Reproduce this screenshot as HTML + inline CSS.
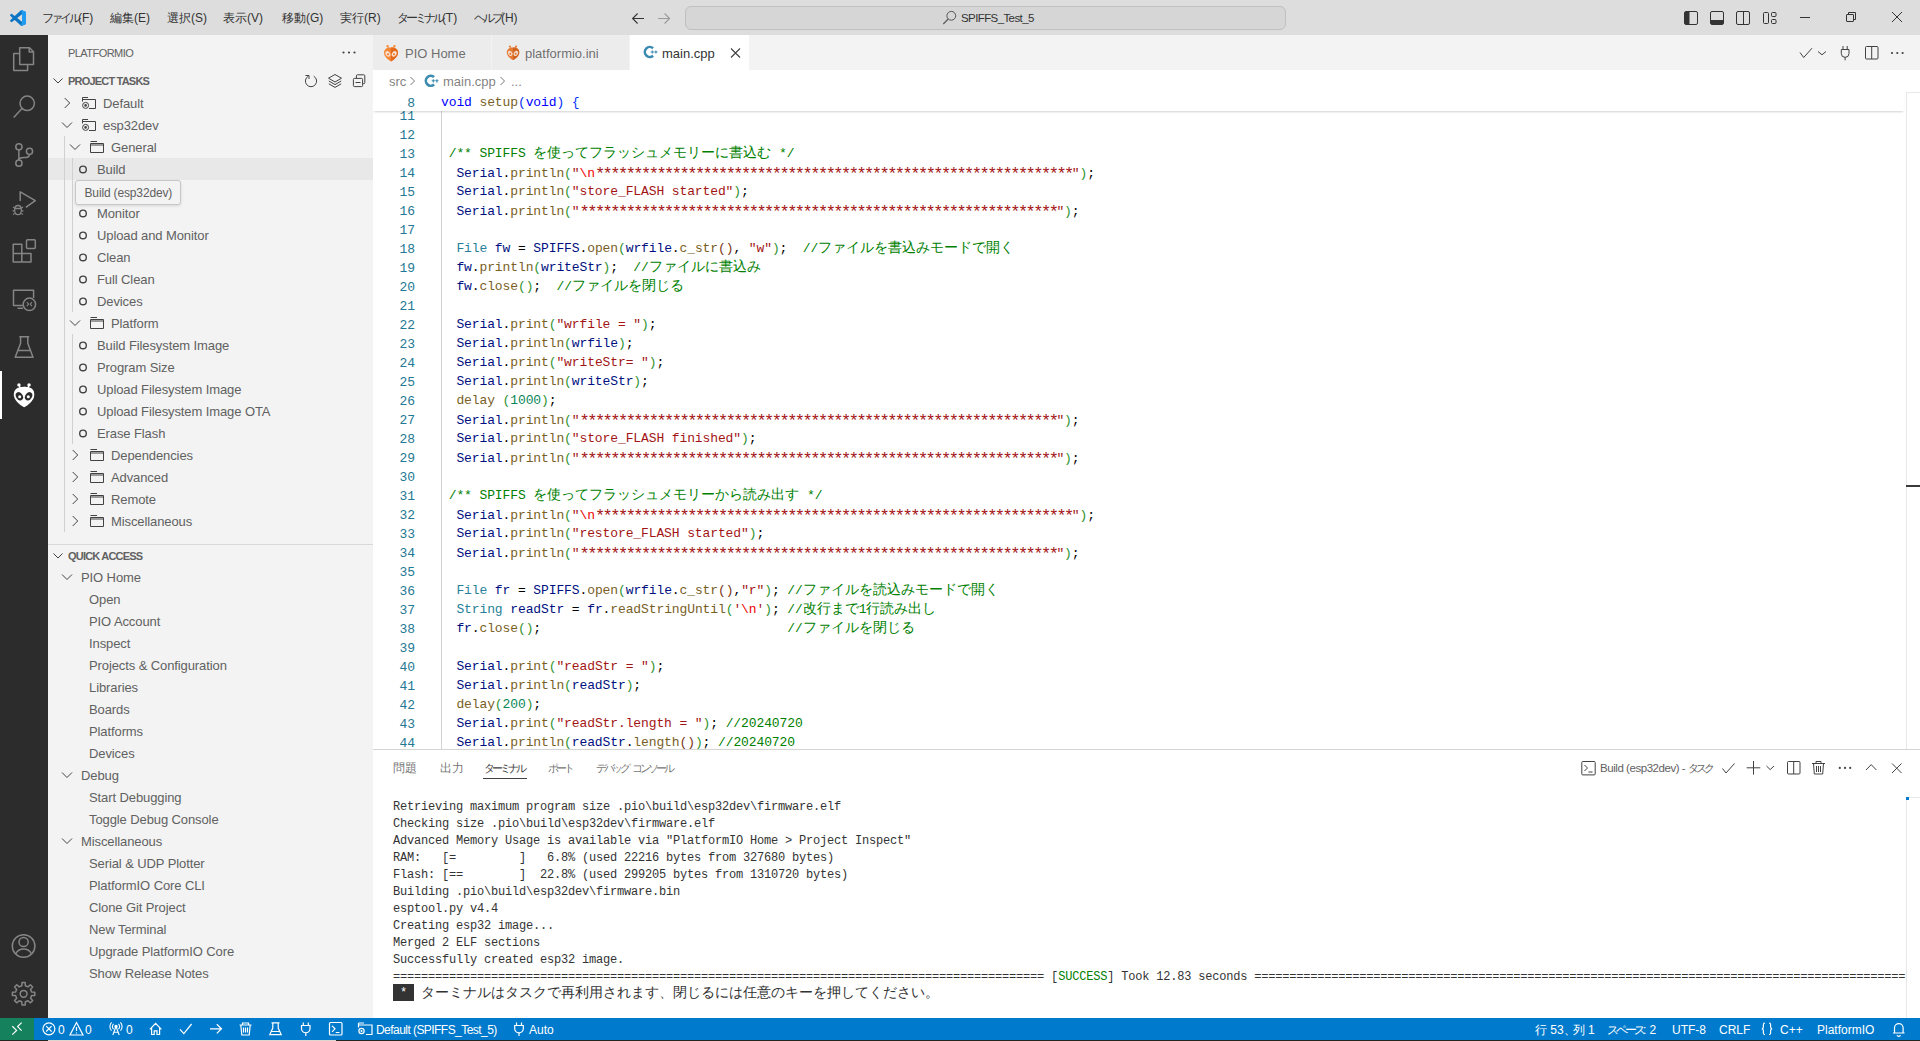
<!DOCTYPE html><html><head><meta charset="utf-8"><style>
*{box-sizing:border-box}
html,body{margin:0;padding:0}
body{width:1920px;height:1041px;overflow:hidden;position:relative;background:#fff;font-family:"Liberation Sans",sans-serif;font-size:13px;color:#616161}
.a{position:absolute}
.t{position:absolute;white-space:pre}
svg{position:absolute;overflow:visible}
#title{left:0;top:0;width:1920px;height:35px;background:#dddddd}
#act{left:0;top:35px;width:48px;height:983px;background:#2c2c2c}
#side{left:48px;top:35px;width:325px;height:983px;background:#f3f3f3}
#tabs{left:373px;top:35px;width:1547px;height:35px;background:#f3f3f3}
#status{left:0;top:1018px;width:1920px;height:22px;background:#007acc}
.menu{color:#333;font-size:12px}
.code{font-family:"Liberation Mono",monospace;font-size:13px;letter-spacing:-0.11px;line-height:19px;height:19px}
.k{font-size:0.97em;letter-spacing:-0.26em}
.code .j,.code .k{font-size:14px;letter-spacing:0;line-height:0}
.term{font-family:"Liberation Mono",monospace;font-size:12px;letter-spacing:-0.2px;color:#333}
.term .j,.term .k{font-size:14px;letter-spacing:0;line-height:0}
.ln{color:#237893}
.kw{color:#0000ff}.fn{color:#795e26}.vr{color:#001080}.st{color:#a31515}.es{color:#ee0000}.cm{color:#008000}.ty{color:#267f99}.nu{color:#098658}.op{color:#000}
.ast{font-size:17px;letter-spacing:-2.51px;position:relative;top:1.5px}
.b1{color:#0431fa}.b2{color:#319331}.b3{color:#7b3814}
.sb{color:#fff;font-size:12px}
</style></head><body>
<div class="a" id="title"></div>
<div class="t menu" style="left:42px;top:7.0px;height:22px;line-height:22px;"><span class="k">ファイル</span>(F)</div>
<div class="t menu" style="left:110px;top:7.0px;height:22px;line-height:22px;"><span class="j">編集</span>(E)</div>
<div class="t menu" style="left:167px;top:7.0px;height:22px;line-height:22px;"><span class="j">選択</span>(S)</div>
<div class="t menu" style="left:223px;top:7.0px;height:22px;line-height:22px;"><span class="j">表示</span>(V)</div>
<div class="t menu" style="left:282px;top:7.0px;height:22px;line-height:22px;"><span class="j">移動</span>(G)</div>
<div class="t menu" style="left:340px;top:7.0px;height:22px;line-height:22px;"><span class="j">実行</span>(R)</div>
<div class="t menu" style="left:397px;top:7.0px;height:22px;line-height:22px;"><span class="k">ターミナル</span>(T)</div>
<div class="t menu" style="left:474px;top:7.0px;height:22px;line-height:22px;"><span class="k">ヘルプ</span>(H)</div>
<div class="a" style="left:685px;top:6px;width:601px;height:24px;background:#d6d6d6;border:1px solid #c0c0c0;border-radius:6px"></div>
<div class="t " style="left:961px;top:7.0px;height:22px;line-height:22px;color:#333;font-size:11.5px;letter-spacing:-0.6px">SPIFFS_Test_5</div>
<div class="a" id="act"></div>
<div class="a" style="left:0;top:371px;width:2px;height:48px;background:#fff"></div>
<div class="a" id="side"></div>
<div class="t " style="left:68px;top:42.0px;height:22px;line-height:22px;font-size:11px;letter-spacing:-0.55px;color:#616161">PLATFORMIO</div>
<div class="t " style="left:68px;top:70.0px;height:22px;line-height:22px;font-size:11px;letter-spacing:-0.8px;font-weight:bold;color:#616161">PROJECT TASKS</div>
<div class="a" style="left:48px;top:158px;width:325px;height:22px;background:#e8e8e8"></div>
<div class="t " style="left:103px;top:93.0px;height:22px;line-height:22px;letter-spacing:-0.1px">Default</div>
<div class="t " style="left:103px;top:115.0px;height:22px;line-height:22px;letter-spacing:-0.1px">esp32dev</div>
<div class="t " style="left:111px;top:137.0px;height:22px;line-height:22px;letter-spacing:-0.1px">General</div>
<div class="t " style="left:97px;top:159.0px;height:22px;line-height:22px;letter-spacing:-0.1px">Build</div>
<div class="t " style="left:97px;top:181.0px;height:22px;line-height:22px;letter-spacing:-0.1px">Upload</div>
<div class="t " style="left:97px;top:203.0px;height:22px;line-height:22px;letter-spacing:-0.1px">Monitor</div>
<div class="t " style="left:97px;top:225.0px;height:22px;line-height:22px;letter-spacing:-0.1px">Upload and Monitor</div>
<div class="t " style="left:97px;top:247.0px;height:22px;line-height:22px;letter-spacing:-0.1px">Clean</div>
<div class="t " style="left:97px;top:269.0px;height:22px;line-height:22px;letter-spacing:-0.1px">Full Clean</div>
<div class="t " style="left:97px;top:291.0px;height:22px;line-height:22px;letter-spacing:-0.1px">Devices</div>
<div class="t " style="left:111px;top:313.0px;height:22px;line-height:22px;letter-spacing:-0.1px">Platform</div>
<div class="t " style="left:97px;top:335.0px;height:22px;line-height:22px;letter-spacing:-0.1px">Build Filesystem Image</div>
<div class="t " style="left:97px;top:357.0px;height:22px;line-height:22px;letter-spacing:-0.1px">Program Size</div>
<div class="t " style="left:97px;top:379.0px;height:22px;line-height:22px;letter-spacing:-0.1px">Upload Filesystem Image</div>
<div class="t " style="left:97px;top:401.0px;height:22px;line-height:22px;letter-spacing:-0.1px">Upload Filesystem Image OTA</div>
<div class="t " style="left:97px;top:423.0px;height:22px;line-height:22px;letter-spacing:-0.1px">Erase Flash</div>
<div class="t " style="left:111px;top:445.0px;height:22px;line-height:22px;letter-spacing:-0.1px">Dependencies</div>
<div class="t " style="left:111px;top:467.0px;height:22px;line-height:22px;letter-spacing:-0.1px">Advanced</div>
<div class="t " style="left:111px;top:489.0px;height:22px;line-height:22px;letter-spacing:-0.1px">Remote</div>
<div class="t " style="left:111px;top:511.0px;height:22px;line-height:22px;letter-spacing:-0.1px">Miscellaneous</div>
<div class="a" style="left:64px;top:136px;width:1px;height:396px;background:#d0d0d0"></div>
<div class="a" style="left:72px;top:158px;width:1px;height:154px;background:#d0d0d0"></div>
<div class="a" style="left:72px;top:334px;width:1px;height:110px;background:#d0d0d0"></div>
<div class="a" style="left:75px;top:180px;width:106px;height:25px;background:#f3f3f3;border:1px solid #c8c8c8;border-radius:3px;box-shadow:0 1px 3px rgba(0,0,0,.12)"></div>
<div class="t " style="left:84.5px;top:182.0px;height:22px;line-height:22px;font-size:12px;letter-spacing:-0.15px;color:#616161">Build (esp32dev)</div>
<div class="a" style="left:48px;top:544px;width:325px;height:1px;background:#d9d9d9"></div>
<div class="t " style="left:68px;top:545.0px;height:22px;line-height:22px;font-size:11px;letter-spacing:-0.8px;font-weight:bold;color:#616161">QUICK ACCESS</div>
<div class="t " style="left:81px;top:567.0px;height:22px;line-height:22px;letter-spacing:-0.1px">PIO Home</div>
<div class="t " style="left:89px;top:589.0px;height:22px;line-height:22px;letter-spacing:-0.1px">Open</div>
<div class="t " style="left:89px;top:611.0px;height:22px;line-height:22px;letter-spacing:-0.1px">PIO Account</div>
<div class="t " style="left:89px;top:633.0px;height:22px;line-height:22px;letter-spacing:-0.1px">Inspect</div>
<div class="t " style="left:89px;top:655.0px;height:22px;line-height:22px;letter-spacing:-0.1px">Projects &amp; Configuration</div>
<div class="t " style="left:89px;top:677.0px;height:22px;line-height:22px;letter-spacing:-0.1px">Libraries</div>
<div class="t " style="left:89px;top:699.0px;height:22px;line-height:22px;letter-spacing:-0.1px">Boards</div>
<div class="t " style="left:89px;top:721.0px;height:22px;line-height:22px;letter-spacing:-0.1px">Platforms</div>
<div class="t " style="left:89px;top:743.0px;height:22px;line-height:22px;letter-spacing:-0.1px">Devices</div>
<div class="t " style="left:81px;top:765.0px;height:22px;line-height:22px;letter-spacing:-0.1px">Debug</div>
<div class="t " style="left:89px;top:787.0px;height:22px;line-height:22px;letter-spacing:-0.1px">Start Debugging</div>
<div class="t " style="left:89px;top:809.0px;height:22px;line-height:22px;letter-spacing:-0.1px">Toggle Debug Console</div>
<div class="t " style="left:81px;top:831.0px;height:22px;line-height:22px;letter-spacing:-0.1px">Miscellaneous</div>
<div class="t " style="left:89px;top:853.0px;height:22px;line-height:22px;letter-spacing:-0.1px">Serial &amp; UDP Plotter</div>
<div class="t " style="left:89px;top:875.0px;height:22px;line-height:22px;letter-spacing:-0.1px">PlatformIO Core CLI</div>
<div class="t " style="left:89px;top:897.0px;height:22px;line-height:22px;letter-spacing:-0.1px">Clone Git Project</div>
<div class="t " style="left:89px;top:919.0px;height:22px;line-height:22px;letter-spacing:-0.1px">New Terminal</div>
<div class="t " style="left:89px;top:941.0px;height:22px;line-height:22px;letter-spacing:-0.1px">Upgrade PlatformIO Core</div>
<div class="t " style="left:89px;top:963.0px;height:22px;line-height:22px;letter-spacing:-0.1px">Show Release Notes</div>
<div class="a" id="tabs"></div>
<div class="a" style="left:373px;top:35px;width:119px;height:35px;background:#ececec;border-right:1px solid #f3f3f3"></div>
<div class="a" style="left:492px;top:35px;width:138px;height:35px;background:#ececec;border-right:1px solid #f3f3f3"></div>
<div class="a" style="left:630px;top:35px;width:119px;height:35px;background:#ffffff"></div>
<div class="t " style="left:405px;top:43.0px;height:22px;line-height:22px;color:rgba(51,51,51,.7)">PIO Home</div>
<div class="t " style="left:525px;top:43.0px;height:22px;line-height:22px;color:rgba(51,51,51,.7)">platformio.ini</div>
<div class="t " style="left:662px;top:43.0px;height:22px;line-height:22px;color:#333">main.cpp</div>
<div class="t " style="left:389px;top:71.0px;height:22px;line-height:22px;color:rgba(97,97,97,.8)">src</div>
<div class="t " style="left:443px;top:71.0px;height:22px;line-height:22px;color:rgba(97,97,97,.8)">main.cpp</div>
<div class="t " style="left:511px;top:71.0px;height:22px;line-height:22px;color:rgba(97,97,97,.8)">...</div>
<div class="a" style="left:373px;top:92px;width:1547px;height:657px;overflow:hidden">
<div class="a" style="left:68px;top:19px;width:1px;height:657px;background:#d3d3d3"></div>
<div class="t code ln" style="left:0;width:42px;text-align:right;top:15px">11</div>
<div class="t code ln" style="left:0;width:42px;text-align:right;top:34px">12</div>
<div class="t code ln" style="left:0;width:42px;text-align:right;top:53px">13</div>
<div class="t code" style="left:68px;top:52px"> <span class="cm">/** SPIFFS <span class="k">を</span><span class="j">使</span><span class="k">ってフラッシュメモリーに</span><span class="j">書込</span><span class="k">む</span> */</span></div>
<div class="t code ln" style="left:0;width:42px;text-align:right;top:72px">14</div>
<div class="t code" style="left:68px;top:71px">  <span class="vr">Serial</span><span class="op">.</span><span class="fn">println</span><span class="b2">(</span><span class="st">"</span><span class="es">\n</span><span class="st"><span class="ast">**************************************************************</span>"</span><span class="b2">)</span><span class="op">;</span></div>
<div class="t code ln" style="left:0;width:42px;text-align:right;top:91px">15</div>
<div class="t code" style="left:68px;top:90px">  <span class="vr">Serial</span><span class="op">.</span><span class="fn">println</span><span class="b2">(</span><span class="st">"store_FLASH started"</span><span class="b2">)</span><span class="op">;</span></div>
<div class="t code ln" style="left:0;width:42px;text-align:right;top:110px">16</div>
<div class="t code" style="left:68px;top:109px">  <span class="vr">Serial</span><span class="op">.</span><span class="fn">println</span><span class="b2">(</span><span class="st">"<span class="ast">**************************************************************</span>"</span><span class="b2">)</span><span class="op">;</span></div>
<div class="t code ln" style="left:0;width:42px;text-align:right;top:129px">17</div>
<div class="t code ln" style="left:0;width:42px;text-align:right;top:148px">18</div>
<div class="t code" style="left:68px;top:147px">  <span class="ty">File</span> <span class="vr">fw</span> <span class="op">=</span> <span class="vr">SPIFFS</span><span class="op">.</span><span class="fn">open</span><span class="b2">(</span><span class="vr">wrfile</span><span class="op">.</span><span class="fn">c_str</span><span class="b3">(</span><span class="b3">)</span><span class="op">,</span> <span class="st">"w"</span><span class="b2">)</span><span class="op">;</span>  <span class="cm">//<span class="k">ファイルを</span><span class="j">書込</span><span class="k">みモードで</span><span class="j">開</span><span class="k">く</span></span></div>
<div class="t code ln" style="left:0;width:42px;text-align:right;top:167px">19</div>
<div class="t code" style="left:68px;top:166px">  <span class="vr">fw</span><span class="op">.</span><span class="fn">println</span><span class="b2">(</span><span class="vr">writeStr</span><span class="b2">)</span><span class="op">;</span>  <span class="cm">//<span class="k">ファイルに</span><span class="j">書込</span><span class="k">み</span></span></div>
<div class="t code ln" style="left:0;width:42px;text-align:right;top:186px">20</div>
<div class="t code" style="left:68px;top:185px">  <span class="vr">fw</span><span class="op">.</span><span class="fn">close</span><span class="b2">(</span><span class="b2">)</span><span class="op">;</span>  <span class="cm">//<span class="k">ファイルを</span><span class="j">閉</span><span class="k">じる</span></span></div>
<div class="t code ln" style="left:0;width:42px;text-align:right;top:205px">21</div>
<div class="t code ln" style="left:0;width:42px;text-align:right;top:224px">22</div>
<div class="t code" style="left:68px;top:223px">  <span class="vr">Serial</span><span class="op">.</span><span class="fn">print</span><span class="b2">(</span><span class="st">"wrfile = "</span><span class="b2">)</span><span class="op">;</span></div>
<div class="t code ln" style="left:0;width:42px;text-align:right;top:243px">23</div>
<div class="t code" style="left:68px;top:242px">  <span class="vr">Serial</span><span class="op">.</span><span class="fn">println</span><span class="b2">(</span><span class="vr">wrfile</span><span class="b2">)</span><span class="op">;</span></div>
<div class="t code ln" style="left:0;width:42px;text-align:right;top:262px">24</div>
<div class="t code" style="left:68px;top:261px">  <span class="vr">Serial</span><span class="op">.</span><span class="fn">print</span><span class="b2">(</span><span class="st">"writeStr= "</span><span class="b2">)</span><span class="op">;</span></div>
<div class="t code ln" style="left:0;width:42px;text-align:right;top:281px">25</div>
<div class="t code" style="left:68px;top:280px">  <span class="vr">Serial</span><span class="op">.</span><span class="fn">println</span><span class="b2">(</span><span class="vr">writeStr</span><span class="b2">)</span><span class="op">;</span></div>
<div class="t code ln" style="left:0;width:42px;text-align:right;top:300px">26</div>
<div class="t code" style="left:68px;top:299px">  <span class="fn">delay</span> <span class="b2">(</span><span class="nu">1000</span><span class="b2">)</span><span class="op">;</span></div>
<div class="t code ln" style="left:0;width:42px;text-align:right;top:319px">27</div>
<div class="t code" style="left:68px;top:318px">  <span class="vr">Serial</span><span class="op">.</span><span class="fn">println</span><span class="b2">(</span><span class="st">"<span class="ast">**************************************************************</span>"</span><span class="b2">)</span><span class="op">;</span></div>
<div class="t code ln" style="left:0;width:42px;text-align:right;top:338px">28</div>
<div class="t code" style="left:68px;top:337px">  <span class="vr">Serial</span><span class="op">.</span><span class="fn">println</span><span class="b2">(</span><span class="st">"store_FLASH finished"</span><span class="b2">)</span><span class="op">;</span></div>
<div class="t code ln" style="left:0;width:42px;text-align:right;top:357px">29</div>
<div class="t code" style="left:68px;top:356px">  <span class="vr">Serial</span><span class="op">.</span><span class="fn">println</span><span class="b2">(</span><span class="st">"<span class="ast">**************************************************************</span>"</span><span class="b2">)</span><span class="op">;</span></div>
<div class="t code ln" style="left:0;width:42px;text-align:right;top:376px">30</div>
<div class="t code ln" style="left:0;width:42px;text-align:right;top:395px">31</div>
<div class="t code" style="left:68px;top:394px"> <span class="cm">/** SPIFFS <span class="k">を</span><span class="j">使</span><span class="k">ってフラッシュメモリーから</span><span class="j">読</span><span class="k">み</span><span class="j">出</span><span class="k">す</span> */</span></div>
<div class="t code ln" style="left:0;width:42px;text-align:right;top:414px">32</div>
<div class="t code" style="left:68px;top:413px">  <span class="vr">Serial</span><span class="op">.</span><span class="fn">println</span><span class="b2">(</span><span class="st">"</span><span class="es">\n</span><span class="st"><span class="ast">**************************************************************</span>"</span><span class="b2">)</span><span class="op">;</span></div>
<div class="t code ln" style="left:0;width:42px;text-align:right;top:433px">33</div>
<div class="t code" style="left:68px;top:432px">  <span class="vr">Serial</span><span class="op">.</span><span class="fn">println</span><span class="b2">(</span><span class="st">"restore_FLASH started"</span><span class="b2">)</span><span class="op">;</span></div>
<div class="t code ln" style="left:0;width:42px;text-align:right;top:452px">34</div>
<div class="t code" style="left:68px;top:451px">  <span class="vr">Serial</span><span class="op">.</span><span class="fn">println</span><span class="b2">(</span><span class="st">"<span class="ast">**************************************************************</span>"</span><span class="b2">)</span><span class="op">;</span></div>
<div class="t code ln" style="left:0;width:42px;text-align:right;top:471px">35</div>
<div class="t code ln" style="left:0;width:42px;text-align:right;top:490px">36</div>
<div class="t code" style="left:68px;top:489px">  <span class="ty">File</span> <span class="vr">fr</span> <span class="op">=</span> <span class="vr">SPIFFS</span><span class="op">.</span><span class="fn">open</span><span class="b2">(</span><span class="vr">wrfile</span><span class="op">.</span><span class="fn">c_str</span><span class="b3">(</span><span class="b3">)</span><span class="op">,</span><span class="st">"r"</span><span class="b2">)</span><span class="op">;</span> <span class="cm">//<span class="k">ファイルを</span><span class="j">読込</span><span class="k">みモードで</span><span class="j">開</span><span class="k">く</span></span></div>
<div class="t code ln" style="left:0;width:42px;text-align:right;top:509px">37</div>
<div class="t code" style="left:68px;top:508px">  <span class="ty">String</span> <span class="vr">readStr</span> <span class="op">=</span> <span class="vr">fr</span><span class="op">.</span><span class="fn">readStringUntil</span><span class="b2">(</span><span class="st">'</span><span class="es">\n</span><span class="st">'</span><span class="b2">)</span><span class="op">;</span> <span class="cm">//<span class="j">改行</span><span class="k">まで</span>1<span class="j">行読</span><span class="k">み</span><span class="j">出</span><span class="k">し</span></span></div>
<div class="t code ln" style="left:0;width:42px;text-align:right;top:528px">38</div>
<div class="t code" style="left:68px;top:527px">  <span class="vr">fr</span><span class="op">.</span><span class="fn">close</span><span class="b2">(</span><span class="b2">)</span><span class="op">;</span>                                <span class="cm">//<span class="k">ファイルを</span><span class="j">閉</span><span class="k">じる</span></span></div>
<div class="t code ln" style="left:0;width:42px;text-align:right;top:547px">39</div>
<div class="t code ln" style="left:0;width:42px;text-align:right;top:566px">40</div>
<div class="t code" style="left:68px;top:565px">  <span class="vr">Serial</span><span class="op">.</span><span class="fn">print</span><span class="b2">(</span><span class="st">"readStr = "</span><span class="b2">)</span><span class="op">;</span></div>
<div class="t code ln" style="left:0;width:42px;text-align:right;top:585px">41</div>
<div class="t code" style="left:68px;top:584px">  <span class="vr">Serial</span><span class="op">.</span><span class="fn">println</span><span class="b2">(</span><span class="vr">readStr</span><span class="b2">)</span><span class="op">;</span></div>
<div class="t code ln" style="left:0;width:42px;text-align:right;top:604px">42</div>
<div class="t code" style="left:68px;top:603px">  <span class="fn">delay</span><span class="b2">(</span><span class="nu">200</span><span class="b2">)</span><span class="op">;</span></div>
<div class="t code ln" style="left:0;width:42px;text-align:right;top:623px">43</div>
<div class="t code" style="left:68px;top:622px">  <span class="vr">Serial</span><span class="op">.</span><span class="fn">print</span><span class="b2">(</span><span class="st">"readStr.length = "</span><span class="b2">)</span><span class="op">;</span> <span class="cm">//20240720</span></div>
<div class="t code ln" style="left:0;width:42px;text-align:right;top:642px">44</div>
<div class="t code" style="left:68px;top:641px">  <span class="vr">Serial</span><span class="op">.</span><span class="fn">println</span><span class="b2">(</span><span class="vr">readStr</span><span class="op">.</span><span class="fn">length</span><span class="b3">(</span><span class="b3">)</span><span class="b2">)</span><span class="op">;</span> <span class="cm">//20240720</span></div>
<div class="a" style="left:0;top:0;width:1531px;height:19px;background:#fff;box-shadow:0 2px 2px -1px rgba(0,0,0,.18)"></div>
<div class="t code ln" style="left:0;width:42px;text-align:right;top:1.5px">8</div>
<div class="t code" style="left:68px;top:0.5px"><span class="kw">void</span> <span class="fn">setup</span><span class="b1">(</span><span class="kw">void</span><span class="b1">)</span> <span class="b1">{</span></div>
</div>
<div class="a" style="left:1906px;top:92px;width:1px;height:657px;background:#e8e8e8"></div>
<div class="a" style="left:1906px;top:92px;width:14px;height:1px;background:#e8e8e8"></div>
<div class="a" style="left:1906px;top:485px;width:14px;height:2px;background:#3a3a3a"></div>
<div class="a" style="left:373px;top:749px;width:1547px;height:1px;background:#d4d4d4"></div>
<div class="t " style="left:393px;top:757.0px;height:22px;line-height:22px;font-size:11.5px;color:rgba(66,66,66,.75)"><span class="j">問題</span></div>
<div class="t " style="left:440px;top:757.0px;height:22px;line-height:22px;font-size:11.5px;color:rgba(66,66,66,.75)"><span class="j">出力</span></div>
<div class="t " style="left:484px;top:757.0px;height:22px;line-height:22px;font-size:11.5px;color:#424242"><span class="k">ターミナル</span></div>
<div class="t " style="left:548px;top:757.0px;height:22px;line-height:22px;font-size:11.5px;color:rgba(66,66,66,.75)"><span class="k">ポート</span></div>
<div class="t " style="left:596px;top:757.0px;height:22px;line-height:22px;font-size:11.5px;color:rgba(66,66,66,.75)"><span class="k">デバッグ</span> <span class="k">コンソール</span></div>
<div class="a" style="left:483px;top:778px;width:44px;height:1px;background:#424242"></div>
<div class="t " style="left:1600px;top:757.0px;height:22px;line-height:22px;font-size:11.5px;letter-spacing:-0.45px;color:#616161">Build (esp32dev) - <span class="k">タスク</span></div>
<div class="t term" style="left:393px;top:798.5px;height:17px;line-height:17px;">Retrieving maximum program size .pio\build\esp32dev\firmware.elf</div>
<div class="t term" style="left:393px;top:815.5px;height:17px;line-height:17px;">Checking size .pio\build\esp32dev\firmware.elf</div>
<div class="t term" style="left:393px;top:832.5px;height:17px;line-height:17px;">Advanced Memory Usage is available via "PlatformIO Home &gt; Project Inspect"</div>
<div class="t term" style="left:393px;top:849.5px;height:17px;line-height:17px;">RAM:   [=         ]   6.8% (used 22216 bytes from 327680 bytes)</div>
<div class="t term" style="left:393px;top:866.5px;height:17px;line-height:17px;">Flash: [==        ]  22.8% (used 299205 bytes from 1310720 bytes)</div>
<div class="t term" style="left:393px;top:883.5px;height:17px;line-height:17px;">Building .pio\build\esp32dev\firmware.bin</div>
<div class="t term" style="left:393px;top:900.5px;height:17px;line-height:17px;">esptool.py v4.4</div>
<div class="t term" style="left:393px;top:917.5px;height:17px;line-height:17px;">Creating esp32 image...</div>
<div class="t term" style="left:393px;top:934.5px;height:17px;line-height:17px;">Merged 2 ELF sections</div>
<div class="t term" style="left:393px;top:951.5px;height:17px;line-height:17px;">Successfully created esp32 image.</div>
<div class="t term" style="left:393px;top:968.5px;height:17px;line-height:17px">============================================================================================= [<span style="color:#008000">SUCCESS</span>] Took 12.83 seconds =============================================================================================</div>
<div class="a" style="left:393px;top:984px;width:21px;height:17px;background:#333"></div>
<div class="t term" style="left:400px;top:984.5px;height:17px;line-height:17px;color:#fff">*</div>
<div class="t term" style="left:421px;top:985.5px;height:17px;line-height:17px"><span class="k">ターミナルはタスクで</span><span class="j">再利用</span><span class="k">されます、</span><span class="j">閉</span><span class="k">じるには</span><span class="j">任意</span><span class="k">のキーを</span><span class="j">押</span><span class="k">してください。</span></div>
<div class="a" style="left:1906px;top:797px;width:1px;height:221px;background:#e8e8e8"></div>
<div class="a" style="left:1906px;top:797px;width:14px;height:1px;background:#e8e8e8"></div>
<div class="a" style="left:1906px;top:797px;width:3px;height:3px;background:#007acc"></div>
<div class="a" id="status"></div>
<div class="a" style="left:0;top:1018px;width:34px;height:22px;background:#16825d"></div>
<div class="a" style="left:0;top:1040px;width:1920px;height:1px;background:#22261e"></div>
<div class="a" style="left:48px;top:1040px;width:288px;height:1px;background:#ddd6cf"></div>
<div class="t sb" style="left:58px;top:1019.0px;height:22px;line-height:22px;">0</div>
<div class="t sb" style="left:85px;top:1019.0px;height:22px;line-height:22px;">0</div>
<div class="t sb" style="left:126px;top:1019.0px;height:22px;line-height:22px;">0</div>
<div class="t sb" style="left:529px;top:1019.0px;height:22px;line-height:22px;">Auto</div>
<div class="t sb" style="left:376px;top:1019.0px;height:22px;line-height:22px;letter-spacing:-0.55px">Default (SPIFFS_Test_5)</div>
<div class="t sb" style="left:1535px;top:1019.0px;height:22px;line-height:22px;"><span class="j">行</span> 53<span class="k">、</span><span class="j">列</span> 1</div>
<div class="t sb" style="left:1607px;top:1019.0px;height:22px;line-height:22px;"><span class="k">スペース</span>: 2</div>
<div class="t sb" style="left:1672px;top:1019.0px;height:22px;line-height:22px;">UTF-8</div>
<div class="t sb" style="left:1719px;top:1019.0px;height:22px;line-height:22px;">CRLF</div>
<div class="t sb" style="left:1780px;top:1019.0px;height:22px;line-height:22px;">C++</div>
<div class="t sb" style="left:1817px;top:1019.0px;height:22px;line-height:22px;">PlatformIO</div>
<svg class="a" style="left:0;top:0" width="1920" height="1041" viewBox="0 0 1920 1041"><g transform="translate(10,10) scale(0.16)"><path fill="#0a74c4" fill-rule="evenodd" d="M70.9 99.3c1.6.6 3.4.6 5-.2l20.6-9.9c2.2-1 3.5-3.2 3.5-5.6V16.4c0-2.4-1.4-4.6-3.5-5.6L75.9.9c-2.1-1-4.5-.8-6.4.6-.3.2-.5.4-.7.6L29.4 38 12.2 25c-1.6-1.2-3.8-1.1-5.3.2L1.4 30.3c-1.8 1.6-1.8 4.5 0 6.2L16.2 50 1.4 63.6c-1.8 1.7-1.8 4.5 0 6.2l5.5 5c1.5 1.4 3.7 1.5 5.3.2l17.2-13 39.4 35.9c.6.6 1.4 1.1 2.1 1.4zM75 27.3 45.1 50 75 72.7V27.3z"/><path fill="#1f9cf0" d="M69.5 1.4C71.3.1 73.8-.1 75.9.9L96.5 10.8C98.6 11.8 100 14 100 16.4V83.6C100 86 98.6 88.2 96.5 89.2L75.9 99.1C74.3 99.9 72.5 99.9 70.9 99.3C70.1 99 69.4 98.5 68.8 97.9L75 72.7V27.3Z"/></g><path d="M644 18.5H632.6M637.6 13.5L632.6 18.5L637.6 23.5" stroke="#333" stroke-width="1.1" fill="none"/><path d="M658.2 18.5H669.6M664.6 13.5L669.6 18.5L664.6 23.5" stroke="#9a9a9a" stroke-width="1.1" fill="none"/><circle cx="951.3" cy="15.8" r="4.4" stroke="#555" stroke-width="1" fill="none"/><path d="M948.2 19L943.3 24" stroke="#555" stroke-width="1.1"/><g stroke="#333" stroke-width="1" fill="none"><rect x="1684.5" y="11.5" width="13" height="13" rx="1.5"/><rect x="1710.5" y="11.5" width="13" height="13" rx="1.5"/><rect x="1736.5" y="11.5" width="13" height="13" rx="1.5"/><path d="M1743.5 11.5V24.5"/><rect x="1763.5" y="12.5" width="5" height="11" rx="1"/><rect x="1771.5" y="12.5" width="4.5" height="4" rx="1"/><rect x="1771.5" y="19.5" width="4.5" height="4" rx="1"/><path d="M1800 17.5H1810"/><rect x="1846.5" y="14.5" width="7" height="7" rx="0.5"/><path d="M1848.5 14.5V12.5H1855.5V19.5H1853.5"/><path d="M1892 12L1902 22M1902 12L1892 22"/></g><path d="M1685 12h4.5v12h-4.5z" fill="#333"/><path d="M1711 20h12v4h-12z" fill="#333"/><g stroke="#858585" stroke-width="1.5" fill="none" stroke-linejoin="round"><path d="M19.7 47.7H29.5L33.5 51.7V64.5H19.7Z"/><path d="M29.2 47.7V51.9H33.5"/><path d="M19.7 53.5H13.7V70.5H27.6V64.5"/><circle cx="27.2" cy="103.3" r="7.2"/><path d="M22 108.6L13.7 117.6"/><circle cx="18.9" cy="146.8" r="3.1"/><circle cx="18.9" cy="163.2" r="3.1"/><circle cx="29.5" cy="151.3" r="3.1"/><path d="M18.9 149.9V160.1"/><path d="M29.5 154.4C29.5 157.5 27 157.6 24 157.6C21 157.6 18.9 158.5 18.9 160"/><path d="M20.2 201V191.8L35.3 200.6L25.8 207.4"/><path d="M18 205.5c2.2 0 3.4 1.8 3.4 4.5s-1.2 4.6-3.4 4.6-3.4-1.9-3.4-4.6 1.2-4.5 3.4-4.5zM14.6 208.5H21.4" stroke-width="1.3"/><path d="M13 207l1.6 1M23 207l-1.6 1M12.6 210.8H14.6M21.4 210.8H23.4M13 214.5l1.6-1M23 214.5l-1.6-1" stroke-width="1.2"/><path d="M13.2 244.2H21.8V253.5H31V262.1H13.2Z"/><path d="M13.2 253.5H21.8V262.1"/><rect x="26.5" y="239.8" width="8.8" height="8.8" rx="1"/><path d="M33.6 298V290.3H13.5V305.5H22.8"/><path d="M17.5 308.3H23"/><circle cx="29.4" cy="304.3" r="6.2"/><path d="M26.8 302.2L28.6 304.2L26.8 306.2M32 302.2L30.2 304.2L32 306.2" stroke-width="1.1"/><path d="M19.3 336.7H29.2M20.6 336.7V343.3L15.2 357.2H33L27.8 343.3V336.7M17.8 350.5H30.6"/><circle cx="23.6" cy="946" r="11.3"/><circle cx="23.6" cy="942" r="4.6"/><path d="M15.6 954c1.6-3.2 4.4-5 8-5s6.4 1.8 8 5"/></g><path d="M31.60 992.01 L34.79 992.22 L34.79 995.38 L31.60 995.59 L30.52 998.19 L32.63 1000.60 L30.40 1002.83 L27.99 1000.72 L25.39 1001.80 L25.18 1004.99 L22.02 1004.99 L21.81 1001.80 L19.21 1000.72 L16.80 1002.83 L14.57 1000.60 L16.68 998.19 L15.60 995.59 L12.41 995.38 L12.41 992.22 L15.60 992.01 L16.68 989.41 L14.57 987.00 L16.80 984.77 L19.21 986.88 L21.81 985.80 L22.02 982.61 L25.18 982.61 L25.39 985.80 L27.99 986.88 L30.40 984.77 L32.63 987.00 L30.52 989.41Z" stroke="#858585" stroke-width="1.5" fill="none" stroke-linejoin="round"/><circle cx="23.6" cy="993.8" r="3.4" stroke="#858585" stroke-width="1.5" fill="none"/><g transform="translate(24,386.8) scale(1.0)"><path d="M-5.05 -1.8L-3.4 2.2M5.05 -1.8L3.4 2.2" stroke="#ffffff" stroke-width="1.3"/><circle cx="-5.05" cy="-1.9" r="1.7" fill="#ffffff"/><circle cx="5.05" cy="-1.9" r="1.7" fill="#ffffff"/><path d="M0 0C7 0 10.2 2.9 10.2 7.9C10.2 13.4 4 18.4 0 20.4C-4 18.4 -10.2 13.4 -10.2 7.9C-10.2 2.9 -7 0 0 0Z" fill="#ffffff"/><path d="M0 0C7 0 10.2 2.9 10.2 7.9C10.2 13.4 4 18.4 0 20.4Z" fill="#ffffff"/><ellipse cx="-4.6" cy="9.4" rx="3.3" ry="4.4" fill="#2c2c2c" transform="rotate(-32 -4.6 9.4)"/><ellipse cx="4.6" cy="9.4" rx="3.3" ry="4.4" fill="#2c2c2c" transform="rotate(32 4.6 9.4)"/><circle cx="-4.3" cy="10" r="1.5" fill="#ffffff"/><circle cx="4.3" cy="10" r="1.5" fill="#ffffff"/></g><g fill="#424242"><circle cx="343.5" cy="52.5" r="1.1"/><circle cx="349" cy="52.5" r="1.1"/><circle cx="354.5" cy="52.5" r="1.1"/></g><g stroke="#424242" stroke-width="1" fill="none"><path d="M53.5 78.5L58 83L62.5 78.5"/><path d="M53.5 553.5L58 558L62.5 553.5"/><path d="M308.3 76.2A5.6 5.6 0 1 0 313.7 76.2"/><path d="M305.5 75.5H309V79"/><path d="M335 74.5L341.5 78.2L335 82L328.5 78.2Z"/><path d="M328.8 81L335 84.6L341.2 81M328.8 83.8L335 87.4L341.2 83.8"/><rect x="353.4" y="78.4" width="9.2" height="8.2" rx="1"/><path d="M356.4 78.4V75.8A1 1 0 0 1 357.4 74.8H363.8A1 1 0 0 1 364.8 75.8V82.6A1 1 0 0 1 363.8 83.6H362.6"/><path d="M355.5 82.5H360.5"/></g><path d="M64.7 98L69.7 103L64.7 108" stroke="#424242" stroke-width="1" fill="none"/><g stroke="#424242" stroke-width="1" fill="none"><path d="M82.5 97.5H88"/><path d="M82.5 99.5H95.5V108.5H89"/><path d="M82.5 97.5V101.5"/><circle cx="85.6" cy="105.4" r="3"/></g><circle cx="85.6" cy="105.4" r="1.3" fill="#424242"/><path d="M62 122.5L67 127.5L72 122.5" stroke="#424242" stroke-width="1" fill="none"/><g stroke="#424242" stroke-width="1" fill="none"><path d="M82.5 119.5H88"/><path d="M82.5 121.5H95.5V130.5H89"/><path d="M82.5 119.5V123.5"/><circle cx="85.6" cy="127.4" r="3"/></g><circle cx="85.6" cy="127.4" r="1.3" fill="#424242"/><path d="M70 144.5L75 149.5L80 144.5" stroke="#424242" stroke-width="1" fill="none"/><g stroke="#424242" stroke-width="1" fill="none"><path d="M90.5 143.5H103.5V152.5H90.5Z"/><path d="M90.5 141.5H97"/><path d="M90.5 145H103.5"/></g><circle cx="83" cy="169.4" r="3.3" stroke="#424242" stroke-width="1.4" fill="none"/><circle cx="83" cy="213.4" r="3.3" stroke="#424242" stroke-width="1.4" fill="none"/><circle cx="83" cy="235.4" r="3.3" stroke="#424242" stroke-width="1.4" fill="none"/><circle cx="83" cy="257.4" r="3.3" stroke="#424242" stroke-width="1.4" fill="none"/><circle cx="83" cy="279.4" r="3.3" stroke="#424242" stroke-width="1.4" fill="none"/><circle cx="83" cy="301.4" r="3.3" stroke="#424242" stroke-width="1.4" fill="none"/><path d="M70 320.5L75 325.5L80 320.5" stroke="#424242" stroke-width="1" fill="none"/><g stroke="#424242" stroke-width="1" fill="none"><path d="M90.5 319.5H103.5V328.5H90.5Z"/><path d="M90.5 317.5H97"/><path d="M90.5 321H103.5"/></g><circle cx="83" cy="345.4" r="3.3" stroke="#424242" stroke-width="1.4" fill="none"/><circle cx="83" cy="367.4" r="3.3" stroke="#424242" stroke-width="1.4" fill="none"/><circle cx="83" cy="389.4" r="3.3" stroke="#424242" stroke-width="1.4" fill="none"/><circle cx="83" cy="411.4" r="3.3" stroke="#424242" stroke-width="1.4" fill="none"/><circle cx="83" cy="433.4" r="3.3" stroke="#424242" stroke-width="1.4" fill="none"/><path d="M72.7 450L77.7 455L72.7 460" stroke="#424242" stroke-width="1" fill="none"/><g stroke="#424242" stroke-width="1" fill="none"><path d="M90.5 451.5H103.5V460.5H90.5Z"/><path d="M90.5 449.5H97"/><path d="M90.5 453H103.5"/></g><path d="M72.7 472L77.7 477L72.7 482" stroke="#424242" stroke-width="1" fill="none"/><g stroke="#424242" stroke-width="1" fill="none"><path d="M90.5 473.5H103.5V482.5H90.5Z"/><path d="M90.5 471.5H97"/><path d="M90.5 475H103.5"/></g><path d="M72.7 494L77.7 499L72.7 504" stroke="#424242" stroke-width="1" fill="none"/><g stroke="#424242" stroke-width="1" fill="none"><path d="M90.5 495.5H103.5V504.5H90.5Z"/><path d="M90.5 493.5H97"/><path d="M90.5 497H103.5"/></g><path d="M72.7 516L77.7 521L72.7 526" stroke="#424242" stroke-width="1" fill="none"/><g stroke="#424242" stroke-width="1" fill="none"><path d="M90.5 517.5H103.5V526.5H90.5Z"/><path d="M90.5 515.5H97"/><path d="M90.5 519H103.5"/></g><path d="M62 574.5L67 579.5L72 574.5" stroke="#424242" stroke-width="1" fill="none"/><path d="M62 772.5L67 777.5L72 772.5" stroke="#424242" stroke-width="1" fill="none"/><path d="M62 838.5L67 843.5L72 838.5" stroke="#424242" stroke-width="1" fill="none"/><g transform="translate(391,47.4) scale(0.6862745098039216)"><path d="M-5.05 -1.8L-3.4 2.2M5.05 -1.8L3.4 2.2" stroke="#f58634" stroke-width="1.3"/><circle cx="-5.05" cy="-1.9" r="1.7" fill="#f58634"/><circle cx="5.05" cy="-1.9" r="1.7" fill="#f58634"/><path d="M0 0C7 0 10.2 2.9 10.2 7.9C10.2 13.4 4 18.4 0 20.4C-4 18.4 -10.2 13.4 -10.2 7.9C-10.2 2.9 -7 0 0 0Z" fill="#f58634"/><path d="M0 0C7 0 10.2 2.9 10.2 7.9C10.2 13.4 4 18.4 0 20.4Z" fill="#e2691d"/><ellipse cx="-4.6" cy="9.4" rx="3.3" ry="4.4" fill="#f8e0cc" transform="rotate(-32 -4.6 9.4)"/><ellipse cx="4.6" cy="9.4" rx="3.3" ry="4.4" fill="#f8e0cc" transform="rotate(32 4.6 9.4)"/><circle cx="-4.3" cy="10" r="1.5" fill="#f07a2a"/><circle cx="4.3" cy="10" r="1.5" fill="#f07a2a"/></g><g transform="translate(513,47.6) scale(0.6127450980392157)"><path d="M-5.05 -1.8L-3.4 2.2M5.05 -1.8L3.4 2.2" stroke="#e57b35" stroke-width="1.3"/><circle cx="-5.05" cy="-1.9" r="1.7" fill="#e57b35"/><circle cx="5.05" cy="-1.9" r="1.7" fill="#e57b35"/><path d="M0 0C7 0 10.2 2.9 10.2 7.9C10.2 13.4 4 18.4 0 20.4C-4 18.4 -10.2 13.4 -10.2 7.9C-10.2 2.9 -7 0 0 0Z" fill="#e57b35"/><path d="M0 0C7 0 10.2 2.9 10.2 7.9C10.2 13.4 4 18.4 0 20.4Z" fill="#d1641f"/><ellipse cx="-4.6" cy="9.4" rx="3.3" ry="4.4" fill="#f5dccb" transform="rotate(-32 -4.6 9.4)"/><ellipse cx="4.6" cy="9.4" rx="3.3" ry="4.4" fill="#f5dccb" transform="rotate(32 4.6 9.4)"/><circle cx="-4.3" cy="10" r="1.5" fill="#e0722d"/><circle cx="4.3" cy="10" r="1.5" fill="#e0722d"/></g><path d="M653.1 48.2A5 5 0 1 0 653.1 55.8" stroke="#3c8bb0" stroke-width="2.6" fill="none"/><path d="M650.7 52H653.9M652.3 50.4V53.6M654.3 52H657.5M655.9 50.4V53.6" stroke="#3c8bb0" stroke-width="1.1"/><path d="M731 48.5L740 57.5M740 48.5L731 57.5" stroke="#424242" stroke-width="1.1"/><path d="M410.5 77L414.5 81L410.5 85" stroke="#777" stroke-width="1" fill="none"/><path d="M500.5 77L504.5 81L500.5 85" stroke="#777" stroke-width="1" fill="none"/><path d="M434.1 77.0A5 5 0 1 0 434.1 84.6" stroke="#3c8bb0" stroke-width="2.6" fill="none"/><path d="M431.7 80.8H434.9M433.3 79.2V82.39999999999999M435.3 80.8H438.5M436.9 79.2V82.39999999999999" stroke="#3c8bb0" stroke-width="1.1"/><g stroke="#424242" stroke-width="1" fill="none"><path d="M1800 52.5L1803.7 57.5L1812 48.2"/><path d="M1818 51.5L1822 54.8L1826 51.5"/><path d="M1843 46V49.5M1847.2 46V49.5M1841.3 49.5H1849V53.5A3.8 3.8 0 0 1 1841.3 53.5Z"/><path d="M1845.1 57V60.3"/><rect x="1865.5" y="46.5" width="12.5" height="12.5" rx="1"/><path d="M1871.7 46.5V59"/></g><g fill="#424242"><circle cx="1892" cy="53" r="1.1"/><circle cx="1897.3" cy="53" r="1.1"/><circle cx="1902.6" cy="53" r="1.1"/></g><g stroke="#424242" stroke-width="1" fill="none"><rect x="1581.8" y="761.5" width="13.4" height="13.4" rx="1"/><path d="M1584.5 765L1587.5 768L1584.5 771M1588.5 772H1592.5"/><path d="M1722.5 768.5L1726 773L1734.5 763.5"/><path d="M1753.5 761V774.6M1746.7 767.8H1760.3"/><path d="M1766.5 766L1770.2 769.6L1774 766"/><rect x="1787.5" y="761.5" width="12.5" height="12.5" rx="1"/><path d="M1793.7 761.5V774"/><path d="M1812 763.5H1825M1816 763.5V761.5H1821V763.5M1813.5 763.5L1814.3 774H1822.7L1823.5 763.5M1816.5 766V772M1818.5 766V772M1820.5 766V772"/><path d="M1866 770L1871.2 764.6L1876.4 770"/><path d="M1892 763.5L1901.5 773M1901.5 763.5L1892 773"/></g><g fill="#424242"><circle cx="1839.8" cy="767.9" r="1.1"/><circle cx="1845" cy="767.9" r="1.1"/><circle cx="1850.2" cy="767.9" r="1.1"/></g><g stroke="#ffffff" stroke-width="1.2" fill="none"><path d="M12.3 1026.2L16.6 1030.4L12.3 1034.6M21.6 1022.6L17.6 1026.6L21.6 1030.6"/><circle cx="48.9" cy="1028.8" r="6"/><path d="M46.2 1026.1L51.6 1031.5M51.6 1026.1L46.2 1031.5"/><path d="M76.5 1022.5L83 1035H70Z"/><path d="M76.5 1027V1031M76.5 1032.5V1033.5"/><path d="M116 1026.5L112.8 1035M116 1026.5L119.2 1035M113.8 1032.2H118.2M113.6 1023.8A3.6 3.6 0 0 0 113.6 1029.2M118.4 1023.8A3.6 3.6 0 0 1 118.4 1029.2M111.6 1022.3A6 6 0 0 0 111.6 1030.7M120.4 1022.3A6 6 0 0 1 120.4 1030.7" stroke-width="1.1"/><circle cx="116" cy="1026.5" r="1.1" fill="#fff"/><path d="M149.8 1029.3L155.6 1023.3L161.4 1029.3M151.6 1027.6V1034.5H154.2V1030.8H157V1034.5H159.6V1027.6"/><path d="M180 1029.3L183.8 1033.6L191.6 1024"/><path d="M210 1028.8H221.5M216.8 1024.2L221.5 1028.8L216.8 1033.4"/><path d="M239.5 1025H251.5M242.5 1025V1023H248.5V1025M240.8 1025L241.8 1035H249.2L250.2 1025M243.5 1027.5V1032.5M245.5 1027.5V1032.5M247.5 1027.5V1032.5"/><path d="M271.5 1022.8H279.5M272.8 1022.8V1028L269.8 1034.6H281.2L278.2 1028V1022.8M271 1031.5H280"/><path d="M303.3 1022.5V1025.5M308.3 1022.5V1025.5M301.5 1025.5H310V1028.5A4.25 4.25 0 0 1 301.5 1028.5Z"/><path d="M305.8 1032.7V1036"/><rect x="329.5" y="1022.5" width="12.5" height="12.5" rx="1"/><path d="M332 1025.8L335 1028.8L332 1031.8M335.8 1032.5H339.5"/><path d="M358.5 1023H364M358.5 1025H372V1034.5H366"/><circle cx="361.5" cy="1031" r="2.6"/><path d="M358.5 1023V1027.5"/><path d="M516.5 1022.5V1025.5M521.5 1022.5V1025.5M514.7 1025.5H523.3V1028.5A4.3 4.3 0 0 1 514.7 1028.5Z"/><path d="M519 1032.7V1036"/><path d="M1765 1023C1763 1023 1763.4 1025 1763.4 1026.8C1763.4 1028.2 1763 1028.8 1761.8 1028.8C1763 1028.8 1763.4 1029.4 1763.4 1030.8C1763.4 1032.6 1763 1034.6 1765 1034.6M1769 1023C1771 1023 1770.6 1025 1770.6 1026.8C1770.6 1028.2 1771 1028.8 1772.2 1028.8C1771 1028.8 1770.6 1029.4 1770.6 1030.8C1770.6 1032.6 1771 1034.6 1769 1034.6"/><path d="M1893 1033H1904.6M1894.5 1033V1028A4.3 4.3 0 0 1 1903.1 1028V1033M1897 1035.3A2 2 0 0 0 1900.6 1035.3"/></g><circle cx="361.5" cy="1031" r="1" fill="#fff"/></svg>
</body></html>
